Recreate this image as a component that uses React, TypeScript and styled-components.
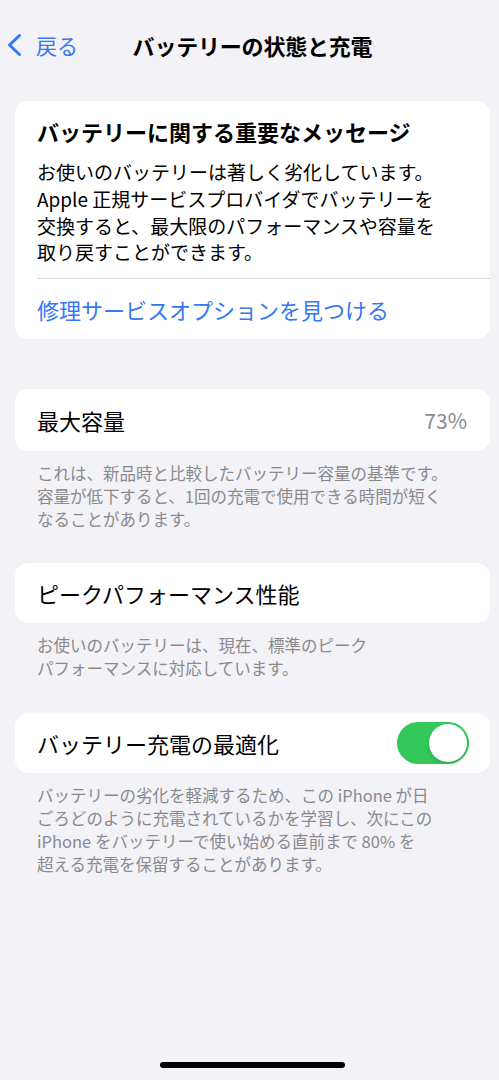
import React from "react";
import styled, { createGlobalStyle } from "styled-components";

const GlobalStyle = createGlobalStyle`
  html, body {
    margin: 0;
    padding: 0;
    background: #f2f2f7;
  }
  body {
    font-family: "Noto Sans CJK JP", "Noto Sans", sans-serif;
    -webkit-font-smoothing: antialiased;
  }
`;

const Page = styled.div`
  width: 499px;
  min-height: 1080px;
  box-sizing: border-box;
  display: flex;
  flex-direction: column;
  background: #f2f2f7;
  padding-top: 20px;
  padding-bottom: 12px;
`;

const NavBar = styled.div`
  height: 50px;
  display: grid;
  grid-template-columns: 1fr auto 1fr;
  align-items: center;
  padding-left: 6px;
`;

const BackButton = styled.div`
  display: flex;
  align-items: center;
  gap: 14px;
  color: #3478f6;
  font-size: 21px;
  line-height: 26px;
`;

const NavTitle = styled.div`
  font-size: 22px;
  font-weight: 700;
  color: #000;
  line-height: 28px;
  letter-spacing: -0.2px;
`;

const Content = styled.div`
  display: flex;
  flex-direction: column;
  padding: 0 9px 0 15px;
`;

const Card = styled.div<{ $mt: number }>`
  margin-top: ${(p) => p.$mt}px;
  background: #fff;
  border-radius: 13px;
  overflow: hidden;
`;

const MessageBody = styled.div`
  padding: 16px 22px 12px 22px;
  display: flex;
  flex-direction: column;
  gap: 14px;
`;

const MessageTitle = styled.div`
  font-size: 22px;
  font-weight: 700;
  line-height: 28px;
  color: #000;
  white-space: nowrap;
`;

const MessageText = styled.div`
  font-size: 19px;
  line-height: 26.8px;
  color: #000;
  white-space: nowrap;
`;

const Separator = styled.div`
  height: 1px;
  background: #d9d9de;
  margin-left: 22px;
`;

const LinkRow = styled.div`
  height: 60px;
  display: flex;
  align-items: center;
  padding: 0 22px;
  font-size: 22px;
  color: #3478f6;
`;

const Row = styled.div<{ $h: number }>`
  height: ${(p) => p.$h}px;
  display: flex;
  align-items: center;
  justify-content: space-between;
  padding: 0 21px 0 22px;
`;

const RowLabel = styled.div`
  font-size: 22px;
  color: #000;
  line-height: 28px;
`;

const RowValue = styled.div`
  font-size: 21px;
  color: #8a8a8e;
  line-height: 28px;
  padding-right: 2px;
`;

const Footer = styled.div`
  margin-top: 11px;
  padding: 0 22px;
  font-size: 16.5px;
  line-height: 23px;
  color: #8a8a8e;
  white-space: nowrap;
`;

const Toggle = styled.div<{ $on: boolean }>`
  width: 72px;
  height: 42px;
  border-radius: 21px;
  background: ${(p) => (p.$on ? "#34c759" : "#e9e9ea")};
  display: flex;
  align-items: center;
  justify-content: ${(p) => (p.$on ? "flex-end" : "flex-start")};
  padding: 2px;
  box-sizing: border-box;
`;

const Knob = styled.div`
  width: 38px;
  height: 38px;
  border-radius: 50%;
  background: #fff;
  box-shadow: 0 2px 4px rgba(0, 0, 0, 0.12), 0 0 1px rgba(0, 0, 0, 0.1);
`;

const HomeIndicator = styled.div`
  margin: auto auto 0 auto;
  width: 185px;
  height: 6px;
  border-radius: 3px;
  background: #000;
  transform: translateX(3px);
`;

const Chevron = () => (
  <svg width="16" height="24" viewBox="0 0 16 24" fill="none">
    <path
      d="M13.5 2.5 L3.5 12 L13.5 21.5"
      stroke="#3478f6"
      strokeWidth="3"
      strokeLinecap="round"
      strokeLinejoin="round"
    />
  </svg>
);

export default function App() {
  return (
    <>
      <GlobalStyle />
      <Page>
        <NavBar>
          <BackButton>
            <Chevron />
            <span>戻る</span>
          </BackButton>
          <NavTitle>バッテリーの状態と充電</NavTitle>
          <div />
        </NavBar>
        <Content>
          <Card $mt={31}>
            <MessageBody>
              <MessageTitle>バッテリーに関する重要なメッセージ</MessageTitle>
              <MessageText>
                お使いのバッテリーは著しく劣化しています。
                <br />
                Apple 正規サービスプロバイダでバッテリーを
                <br />
                交換すると、最大限のパフォーマンスや容量を
                <br />
                取り戻すことができます。
              </MessageText>
            </MessageBody>
            <Separator />
            <LinkRow>修理サービスオプションを見つける</LinkRow>
          </Card>

          <Card $mt={50}>
            <Row $h={62}>
              <RowLabel>最大容量</RowLabel>
              <RowValue>73%</RowValue>
            </Row>
          </Card>
          <Footer>
            これは、新品時と比較したバッテリー容量の基準です。
            <br />
            容量が低下すると、1回の充電で使用できる時間が短く
            <br />
            なることがあります。
          </Footer>

          <Card $mt={32}>
            <Row $h={60}>
              <RowLabel>ピークパフォーマンス性能</RowLabel>
            </Row>
          </Card>
          <Footer>
            お使いのバッテリーは、現在、標準のピーク
            <br />
            パフォーマンスに対応しています。
          </Footer>

          <Card $mt={33}>
            <Row $h={60}>
              <RowLabel>バッテリー充電の最適化</RowLabel>
              <Toggle $on={true}>
                <Knob />
              </Toggle>
            </Row>
          </Card>
          <Footer>
            バッテリーの劣化を軽減するため、この iPhone が日
            <br />
            ごろどのように充電されているかを学習し、次にこの
            <br />
            iPhone をバッテリーで使い始める直前まで 80% を
            <br />
            超える充電を保留することがあります。
          </Footer>
        </Content>
        <HomeIndicator />
      </Page>
    </>
  );
}
